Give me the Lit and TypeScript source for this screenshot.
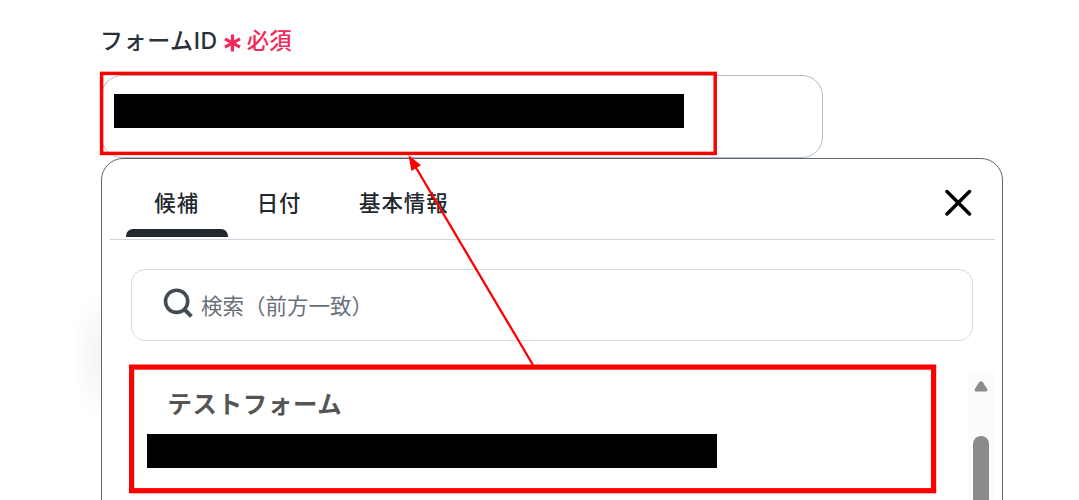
import { LitElement, css, html } from 'lit';
import { customElement, property, state } from 'lit/decorators.js';

interface Candidate {
  name: string;
}

@customElement('form-id-field')
export class FormIdField extends LitElement {
  static override styles = css`
    :host {
      display: block;
    }
    .label {
      display: flex;
      align-items: center;
      height: 32px;
      margin-left: -1px;
      font-family: Inter, 'Noto Sans CJK JP', sans-serif;
      font-size: 23px;
      font-weight: 500;
      line-height: 32px;
      letter-spacing: 0.6px;
      color: #2b3038;
      white-space: nowrap;
    }
    .required {
      display: flex;
      align-items: center;
      gap: 6px;
      margin-left: 6px;
      font-size: 22.4px;
      letter-spacing: 0;
      color: #f4295a;
    }
    .required svg {
      display: block;
      margin-top: 4px;
    }
    .input {
      box-sizing: border-box;
      width: 721.5px;
      height: 83px;
      margin-top: 18px;
      padding: 18px 12px;
      border: 1px solid #b3bac2;
      border-radius: 21px;
      background: #fff;
    }
    .value {
      width: 570px;
      height: 34px;
      background: #000;
    }
  `;

  @property() label = '';

  override render() {
    return html`
      <div class="label">
        <span>${this.label}</span>
        <span class="required">
          <svg width="17" height="18" viewBox="0 0 17 18" fill="none" stroke="currentColor" stroke-width="3.2">
            <path d="M8.5 .5v17M1 4.8l15 8.4M16 4.8L1 13.2" />
          </svg>
          <span>必須</span>
        </span>
      </div>
      <div class="input"><div class="value"></div></div>
    `;
  }
}

@customElement('candidate-panel')
export class CandidatePanel extends LitElement {
  static override styles = css`
    :host {
      display: block;
      box-sizing: border-box;
      width: 902px;
      height: 400px;
      padding: 0 7px 0 8px;
      border: 1px solid #5f6872;
      border-radius: 22px;
      background: #fff;
    }
    .header {
      display: flex;
      justify-content: space-between;
      box-sizing: border-box;
      height: 81px;
      padding: 0 23px 0 16px;
      border-bottom: 1px solid #cfd5dc;
    }
    .tabs {
      display: flex;
    }
    .tab {
      display: flex;
      flex-direction: column;
      justify-content: space-between;
      box-sizing: border-box;
      height: 78px;
      padding-top: 27px;
      font-size: 21.4px;
      font-weight: 500;
      line-height: 32px;
      letter-spacing: 1px;
      color: #23282e;
      white-space: nowrap;
    }
    .tab span {
      padding: 0 29.3px 0 28.3px;
    }
    .tab.active::after {
      content: '';
      height: 8px;
      border-radius: 7px 7px 0 0;
      background: #23282e;
    }
    .close {
      display: block;
      margin-top: 29px;
    }
    .search {
      display: flex;
      align-items: center;
      box-sizing: border-box;
      width: 842px;
      height: 72px;
      margin: 29px 0 0 21px;
      padding-left: 31px;
      border: 1px solid #d5dbe2;
      border-radius: 14px;
      font-size: 21.5px;
      color: #68707c;
      white-space: nowrap;
    }
    .search svg {
      display: block;
      margin: -4px 7px 0 0;
    }
    .search span {
      margin-top: -2px;
    }
    .body {
      display: flex;
      justify-content: space-between;
      height: 130px;
      margin-top: 29px;
    }
    .item {
      padding: 15px 0 0 36.5px;
    }
    .name {
      margin-left: 21px;
      font-size: 24.4px;
      font-weight: 700;
      line-height: 36px;
      letter-spacing: 0.7px;
      color: #555;
    }
    .detail {
      width: 570px;
      height: 34px;
      margin-top: 13px;
      background: #000;
    }
    .scrollbar {
      display: flex;
      flex-direction: column;
      align-items: center;
      width: 27px;
      margin-right: 1px;
      padding-top: 10px;
      background: #fcfcfc;
    }
    .scrollbar svg {
      display: block;
      flex: none;
    }
    .thumb {
      width: 16px;
      height: 200px;
      flex: none;
      margin-top: 44px;
      border-radius: 8px;
      background: #8b8b8b;
    }
  `;

  @property({ type: Array }) tabs: string[] = [];
  @property({ type: Array }) candidates: Candidate[] = [];
  @property() placeholder = '';

  @state() private activeTab = 0;

  override render() {
    return html`
      <div class="header">
        <div class="tabs">
          ${this.tabs.map(
            (tab, idx) => html`
              <div class="tab ${idx === this.activeTab ? 'active' : ''}" @click=${() => (this.activeTab = idx)}><span>${tab}</span></div>
            `
          )}
        </div>
        <svg class="close" width="28" height="28" viewBox="0 0 28 28" fill="none" stroke="#000" stroke-width="3.5" stroke-linecap="round">
          <path d="M3 3.5l22.5 22.5M25.5 3.5L3 26" />
        </svg>
      </div>
      <div class="search">
        <svg width="31" height="30" viewBox="0 0 31 30" fill="none" stroke="#434b54" stroke-width="3.6">
          <circle cx="13.6" cy="13.3" r="11.1" />
          <path d="M21 21l7.4 7.4" stroke-width="4" />
        </svg>
        <span>${this.placeholder}</span>
      </div>
      <div class="body">
        <div>
          ${this.candidates.map(
            (candidate) => html`
              <div class="item">
                <div class="name">${candidate.name}</div>
                <div class="detail"></div>
              </div>
            `
          )}
        </div>
        <div class="scrollbar">
          <svg width="14" height="12" viewBox="0 0 14 12" fill="#8b8b8b">
            <path d="M5.2 2.2Q7 .2 8.8 2.2L13.2 9Q14 11.2 12 11.4H2Q0 11.2.8 9Z" />
          </svg>
          <div class="thumb"></div>
        </div>
      </div>
    `;
  }
}

@customElement('app-root')
export class AppRoot extends LitElement {
  static override styles = css`
    :host {
      display: block;
      position: relative;
      box-sizing: border-box;
      width: 1079px;
      height: 500px;
      padding: 25px 0 0 101px;
      overflow: hidden;
      background: #fff;
      font-family: 'Noto Sans CJK JP', sans-serif;
    }
    /* soft shadow that shows left of the panel */
    .shade {
      position: absolute;
      left: 71px;
      top: 290px;
      width: 60px;
      height: 130px;
      background: radial-gradient(closest-side, rgba(40, 50, 50, 0.06), transparent);
    }
    candidate-panel {
      position: relative;
    }
    .marks {
      position: absolute;
      left: 0;
      top: 0;
      pointer-events: none;
    }
  `;

  private candidates: Candidate[] = [{ name: 'テストフォーム' }];

  override render() {
    return html`
      <div class="shade"></div>
      <form-id-field label="フォームID"></form-id-field>
      <candidate-panel .tabs=${['候補', '日付', '基本情報']} .candidates=${this.candidates} placeholder="検索（前方一致）"></candidate-panel>
      <svg class="marks" width="1079" height="500" viewBox="0 0 1079 500" fill="none" stroke="#f00">
        <rect x="101.6" y="73.4" width="613.6" height="80" stroke-width="3.5" />
        <rect x="131.6" y="367.1" width="802" height="123.6" stroke-width="5.2" />
        <path d="M533 365L415 166" stroke-width="2.3" />
        <path d="M408.5 155L421 165.3L411.4 171Z" fill="#f00" stroke="none" />
      </svg>
    `;
  }
}
